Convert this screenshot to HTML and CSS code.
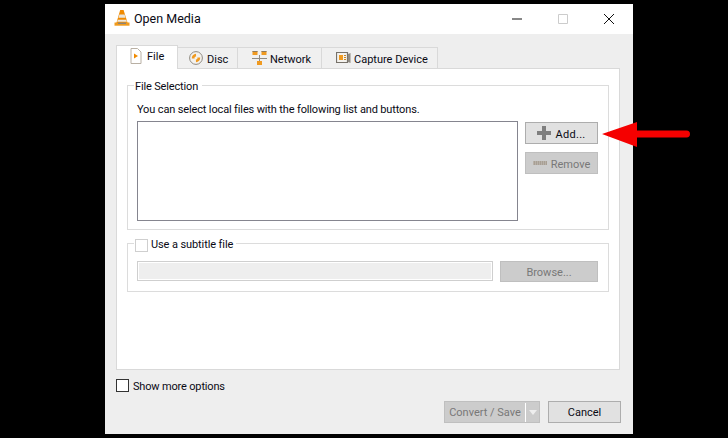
FILE: index.html
```html
<!DOCTYPE html>
<html lang="en">
<head>
<meta charset="utf-8">
<title>Open Media</title>
<link rel="stylesheet" href="styles.css">
</head>
<body>
<div class="window">
  <header class="titlebar">
    <svg class="app-icon" width="18" height="18" viewBox="0 0 18 18"><path d="M7.200 1h3.400l4 13H3.400z" fill="#f08a00"/><path d="M6.400 5.500h5.200l.9 3.200H5.400z" fill="#e8e4dc"/><path d="M4.800 10.800h8.400l.7 2H4.100z" fill="#efe9df"/><path d="M1.500 13.500h15v3.200h-15z" fill="#f09a1c"/><path d="M5 13.600h8v1.400H5z" fill="#8c8478"/></svg>
    <span class="title">Open Media</span>
    <div class="controls">
      <svg width="12" height="12" viewBox="0 0 12 12"><path d="M1 6h10" stroke="#111" fill="none"/></svg>
      <svg width="12" height="12" viewBox="0 0 12 12"><path d="M1.500 1.500h9v9h-9z" stroke="#ccc" fill="none"/></svg>
      <svg width="12" height="12" viewBox="0 0 12 12"><path d="M1 1l10 10M11 1L1 11" stroke="#111" fill="none"/></svg>
    </div>
  </header>
  <main class="body">
    <nav class="tabs">
      <div class="tab tab-file active">
        <svg width="12" height="16" viewBox="0 0 12 16"><path d="M1 .5h6.500l3.500 3.500v11.500H1z" fill="#fff" stroke="#b9b0a4"/><path d="M4 5.500l4 2.500-4 2.500z" fill="#f08a00"/></svg>
        <span>File</span>
      </div>
      <div class="tab tab-disc">
        <svg width="14" height="14" viewBox="0 0 14 14"><circle cx="7" cy="7" r="6.400" fill="#f4f2ee" stroke="#8f8a82"/><path d="M2.800 7.500A4.300 4.300 0 0 1 7 2.800l.1 2.800a1.500 1.500 0 0 0-1.500 1.900zM11.200 6.500A4.300 4.300 0 0 1 7 11.200l-.1-2.800a1.500 1.500 0 0 0 1.500-1.900z" fill="#f09a20"/></svg>
        <span>Disc</span>
      </div>
      <div class="tab tab-network">
        <svg width="15" height="16" viewBox="0 0 15 16"><path d="M0 8.500h15M7.500 5v7" stroke="#8f8a82" fill="none"/><path d="M.5 1h5v4h-5zM9.500 1h5v4h-5zM5 11h5v4H5z" fill="#f09a20"/><path d="M.5 1h5v1h-5zM9.500 1h5v1h-5z" fill="#8f7a5c"/></svg>
        <span>Network</span>
      </div>
      <div class="tab tab-capture">
        <svg width="15" height="14" viewBox="0 0 15 14"><path d="M.500 1.500h11v10H.500z" fill="#f4f2ee" stroke="#77726a" stroke-width="1.200"/><path d="M3 4h4v5H3z" fill="#f09a20"/><path d="M8 4h2v1H8zM8 6h2v1H8zM8 8h2v1H8z" fill="#c98520"/><path d="M12 3l2.500-1v10L12 11z" fill="#8f8a82"/></svg>
        <span>Capture Device</span>
      </div>
    </nav>
    <section class="panel">
      <div class="group group-files">
        <div class="legend legend-files">File Selection</div>
        <p class="hint">You can select local files with the following list and buttons.</p>
        <div class="files-row">
          <div class="listbox"></div>
          <div class="side-buttons">
            <button class="btn btn-icon">
              <svg width="14" height="14" viewBox="0 0 14 14"><path d="M5 0h4v5h5v4H9v5H5V9H0V5h5z" fill="#7f7f7f"/></svg>
              <span class="add-label">Add...</span>
            </button>
            <button class="btn btn-icon disabled">
              <svg class="remove-icon" width="14" height="6" viewBox="0 0 14 6"><path d="M0 1h14v4H0z" fill="#a89f94"/><path d="M0 2h14M0 4h14" stroke="#c8c4be" stroke-dasharray="1 1"/></svg>
              <span>Remove</span>
            </button>
          </div>
        </div>
      </div>
      <div class="group group-sub">
        <div class="legend legend-sub"><span class="check check-light"></span><span>Use a subtitle file</span></div>
        <div class="sub-row">
          <div class="sub-input"></div>
          <button class="btn disabled browse"><span>Browse...</span></button>
        </div>
      </div>
    </section>
    <div class="more"><span class="check check-dark"></span><span class="more-label">Show more options</span></div>
    <footer class="actions">
      <div class="btn disabled convert"><span class="convert-label">Convert / Save</span><span class="convert-arrow"></span></div>
      <button class="btn cancel">Cancel</button>
    </footer>
  </main>
</div>
<svg class="red-arrow" width="88" height="28" viewBox="0 0 88 28"><path d="M0 14 35 2v8.500h49.500a3.300 3.300 0 0 1 0 7H35V27z" fill="#f50000"/></svg>
</body>
</html>
```
FILE: styles.css
```css
* { box-sizing: border-box; }
html, body { margin: 0; height: 100%; }
body {
  background: #000;
  font-family: Roboto, sans-serif;
  font-size: 11px;
  color: #0a0a14;
  overflow: hidden;
  padding: 4px 0 0 105px;
}
.window {
  width: 528px;
  height: 430px;
  background: #eee;
  display: flex;
  flex-direction: column;
}
.titlebar {
  height: 30px;
  background: #fff;
  display: flex;
  align-items: center;
  padding-left: 8px;
  flex: none;
}
.app-icon { margin-right: 3px; margin-top: -2px; }
.title { font-size: 12.500px; margin-top: -1px; }
.controls {
  margin-left: auto;
  display: flex;
  gap: 34px;
  padding-right: 18px;
}
.body {
  flex: 1;
  padding: 11px 13px 0 11px;
  display: flex;
  flex-direction: column;
}
.tabs {
  display: flex;
  height: 24px;
  position: relative;
  z-index: 1;
  margin-bottom: -1px;
  flex: none;
}
.tab {
  display: flex;
  align-items: center;
  gap: 3px;
  margin-top: 2px;
  padding-left: 14px;
  background: #f0f0f0;
  border: 1px solid #d9d9d9;
  border-left: 0;
}
.tab span { margin-top: 2px; }
.tab.active {
  margin-top: 0;
  background: #fff;
  border-left: 1px solid #d9d9d9;
  border-bottom: 0;
  padding-bottom: 4px;
}
.tab-file { width: 62px; gap: 5px; padding-left: 13px; }
.tab-disc { width: 60px; padding-left: 11px; gap: 4px; }
.tab-network { width: 84px; }
.tab-capture { width: 116px; }
.panel {
  height: 302px;
  background: #fff;
  border: 1px solid #d9d9d9;
  padding: 16px 10px 0;
  flex: none;
}
.group {
  position: relative;
  border: 1px solid #dcdcdc;
}
.group-files { height: 145px; padding: 0 10px 0 9px; }
.group-sub { height: 49px; margin-top: 13px; padding: 17px 10px 0 9px; }
.legend {
  position: absolute;
  top: -8px;
  left: 6px;
  background: #fff;
  padding: 0 1px;
  line-height: 18px;
  display: flex;
  align-items: center;
}
.legend-files { letter-spacing: -0.15px; padding-right: 4px; }
.legend-sub { gap: 3px; padding-right: 3px; letter-spacing: -0.1px; }
.hint { margin: 16px 0 0; line-height: 16px; height: 19px; letter-spacing: -0.14px; }
.files-row { display: flex; gap: 7px; align-items: flex-start; }
.listbox {
  width: 381px;
  height: 100px;
  border: 1px solid #85858f;
  background: #fff;
}
.side-buttons { display: flex; flex-direction: column; gap: 8px; width: 73px; padding-top: 1px; }
.btn {
  font: inherit;
  color: inherit;
  height: 22px;
  padding: 0;
  background: #e1e1e1;
  border: 1px solid #adadad;
  display: flex;
  align-items: center;
  justify-content: center;
}
.btn.disabled { background: #ccc; border-color: #bfbfbf; color: #787878; }
.btn-icon { gap: 4px; }
.btn-icon span, .browse span { margin-top: 2px; }
.add-label { letter-spacing: 0.3px; }
.sub-row { display: flex; justify-content: space-between; }
.sub-input {
  width: 356px;
  height: 20px;
  background: #eee;
  border: 1px solid #cfcfcf;
  box-shadow: inset 0 0 0 1px #fff;
}
.browse { width: 98px; height: 21px; }
.check { width: 13px; height: 13px; display: block; background: #fff; flex: none; }
.check-light { border: 1px solid #cfcfcf; }
.check-dark { border: 1px solid #333; }
.more {
  display: flex;
  align-items: center;
  gap: 4px;
  margin-top: 9px;
  height: 13px;
  letter-spacing: -0.17px;
}
.more-label { margin-top: 2px; }
.actions {
  display: flex;
  justify-content: flex-end;
  gap: 8px;
  margin-top: 9px;
  margin-right: -1px;
}
.convert { width: 96px; justify-content: flex-start; }
.convert-label { width: 81px; text-align: center; border-right: 1px solid #fff; height: 19px; line-height: 19px; }
.convert-arrow {
  margin-left: 3px;
  width: 0;
  height: 0;
  border-left: 4px solid transparent;
  border-right: 4px solid transparent;
  border-top: 5px solid #eee;
}
.cancel { width: 73px; }
.red-arrow { position: absolute; left: 602px; top: 120px; }
```
